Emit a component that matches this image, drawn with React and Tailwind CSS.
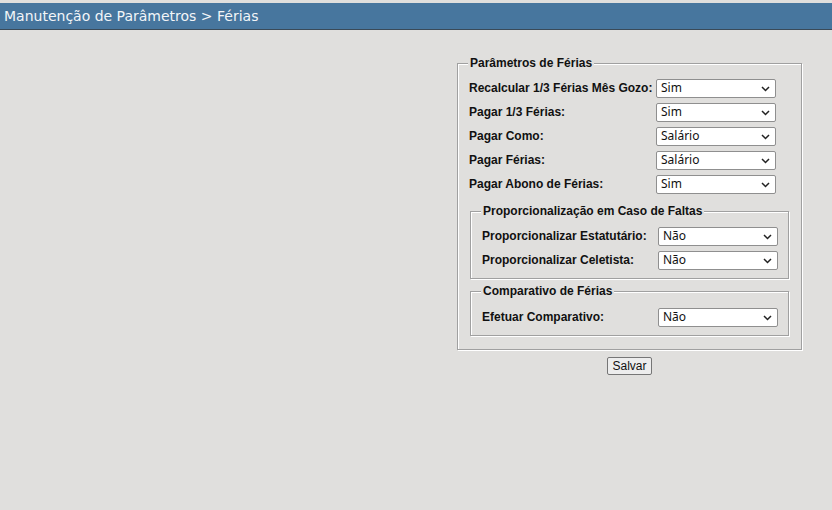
import React from "react";

const label = "font-bold text-[12px] text-[#111] font-['Liberation_Sans',Arial,sans-serif]";

function Select({ value, className = "" }) {
  return (
    <div className={`relative h-[19px] ${className}`}>
      <select
        defaultValue={value}
        className="block appearance-none w-full h-full bg-white border border-[#8f8f8f] rounded-[2px] pl-[4px] text-[12px] leading-none text-[#111] font-['Noto_Sans',sans-serif] outline-none"
      >
        <option>{value}</option>
      </select>
      <svg className="absolute right-[6px] top-[7px] pointer-events-none" width="9" height="6" viewBox="0 0 9 6">
        <path d="M1 1l3.5 3.5L8 1" fill="none" stroke="#222" strokeWidth="1.5" />
      </svg>
    </div>
  );
}

function Row({ text, value, labelW }) {
  return (
    <div className="flex items-center h-[24px]">
      <span className={`${label} shrink-0 leading-[24px]`} style={{ width: labelW }}>{text}</span>
      <Select value={value} className="w-[120px]" />
    </div>
  );
}

function Box({ title, children, className = "" }) {
  return (
    <fieldset className={`border border-[#a0a0a0] shadow-[inset_1px_1px_0_#fff,1px_1px_0_#fff] ${className}`}>
      <legend className={`${label} px-[2px] -ml-[1px] bg-[#e0dfdd] leading-[14px]`}>{title}</legend>
      {children}
    </fieldset>
  );
}

export default function App() {
  return (
    <div className="min-h-screen bg-[#e0dfdd] pt-[3px]">
      <div className="h-[27px] bg-[#47769e] border-b border-[#3a4a58] flex items-center pl-[4px]">
        <span className="text-[14px] text-[#f2f5f8] font-['DejaVu_Sans',sans-serif]">
          Manutenção de Parâmetros &gt; Férias
        </span>
      </div>
      <div className="flex justify-end pr-[30px] pt-[26px]">
        <div className="w-[345px] flex flex-col items-center">
          <Box title="Parâmetros de Férias" className="w-full pl-[11px] pr-[12px] pb-[13px]">
            <div className="pt-[6px]">
              <Row text="Recalcular 1/3 Férias Mês Gozo:" value="Sim" labelW={187} />
              <Row text="Pagar 1/3 Férias:" value="Sim" labelW={187} />
              <Row text="Pagar Como:" value="Salário" labelW={187} />
              <Row text="Pagar Férias:" value="Salário" labelW={187} />
              <Row text="Pagar Abono de Férias:" value="Sim" labelW={187} />
            </div>
            <Box title="Proporcionalização em Caso de Faltas" className="mt-[8px] ml-[1px] pl-[11px] pb-[6px]">
              <div className="pt-[6px]">
                <Row text="Proporcionalizar Estatutário:" value="Não" labelW={176} />
                <Row text="Proporcionalizar Celetista:" value="Não" labelW={176} />
              </div>
            </Box>
            <Box title="Comparativo de Férias" className="mt-[5px] ml-[1px] pl-[11px] pb-[6px]">
              <div className="pt-[7px]">
                <Row text="Efetuar Comparativo:" value="Não" labelW={176} />
              </div>
            </Box>
          </Box>
          <button className="mt-[7px] h-[18px] px-[4px] bg-[#ededed] border border-[#767676] rounded-[2px] text-[12px] leading-none text-[#111] font-['Liberation_Sans',Arial,sans-serif]">
            Salvar
          </button>
        </div>
      </div>
    </div>
  );
}
